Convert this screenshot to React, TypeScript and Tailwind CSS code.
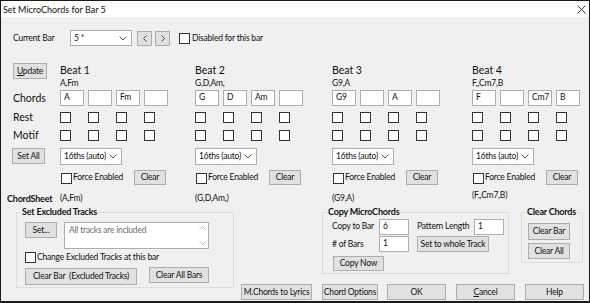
import React from "react";

const Btn = ({ children, className = "" }: { children: React.ReactNode; className?: string }) => (
  <div className={`flex items-center justify-center bg-[#e1e1e1] border border-[#adadad] whitespace-pre shrink-0 ${className}`}>{children}</div>
);

const Check = ({ className = "" }: { className?: string }) => (
  <div className={`w-[11px] h-[11px] bg-white border border-[#333333] shrink-0 ${className}`} />
);

const Field = ({ text = "", className = "" }: { text?: string; className?: string }) => (
  <div className={`h-[16px] bg-white border border-[#abadb3] pl-[3px] pt-[1px] flex items-start shrink-0 ${className}`}>{text}</div>
);

const Chevron = () => (
  <svg width="8" height="5" viewBox="0 0 8 5" className="shrink-0">
    <polyline points="0.5,0.5 4,4 7.5,0.5" fill="none" stroke="#555" strokeWidth="1" />
  </svg>
);

const Combo = ({ text, className = "" }: { text: string; className?: string }) => (
  <div className={`bg-white border border-[#adadad] flex items-center justify-between pl-[3px] pr-[4px] shrink-0 ${className}`}>
    <span>{text}</span>
    <Chevron />
  </div>
);

const cols = ["w-[135px]", "w-[137px]", "w-[140px]", "w-[116px]"];

const beats = [
  { name: "Beat 1", prog: "A,Fm", chords: ["A", "", "Fm", ""], sheet: "(A,Fm)" },
  { name: "Beat 2", prog: "G,D,Am,", chords: ["G", "D", "Am", ""], sheet: "(G,D,Am,)" },
  { name: "Beat 3", prog: "G9,A", chords: ["G9", "", "A", ""], sheet: "(G9,A)" },
  { name: "Beat 4", prog: "F,,Cm7,B", chords: ["F", "", "Cm7", "B"], sheet: "(F,,Cm7,B)" },
];

export default function App() {
  return (
    <div className="w-[590px] h-[303px] border-t border-l border-r border-b-2 border-[#1a1a1a] flex flex-col bg-[#f0f0f0] font-['Lato',sans-serif] text-[8.5px] leading-[11px] tracking-[-0.2px] text-[#111111] overflow-hidden">
      {/* title bar */}
      <div className="h-[16px] bg-white flex items-center justify-between pl-[2px] pr-[2px] shrink-0">
        <span className="text-[9px] tracking-normal">Set MicroChords for Bar 5</span>
        <svg width="9" height="9" viewBox="0 0 9 9" className="mr-[1px]">
          <line x1="0.5" y1="0.5" x2="8.5" y2="8.5" stroke="#222" strokeWidth="0.9" />
          <line x1="8.5" y1="0.5" x2="0.5" y2="8.5" stroke="#222" strokeWidth="0.9" />
        </svg>
      </div>

      {/* current bar row */}
      <div className="flex items-center h-[16px] mt-[13px] pl-[12px] shrink-0">
        <span className="w-[57px]">Current Bar</span>
        <Combo text="5 *" className="w-[62px] h-[16px]" />
        <Btn className="ml-[5px] w-[15px] h-[15px]">
          <svg width="4" height="7" viewBox="0 0 4 7"><polyline points="3.5,0.5 0.5,3.5 3.5,6.5" fill="none" stroke="#333" strokeWidth="0.9" /></svg>
        </Btn>
        <Btn className="ml-[3px] w-[15px] h-[15px]">
          <svg width="4" height="7" viewBox="0 0 4 7"><polyline points="0.5,0.5 3.5,3.5 0.5,6.5" fill="none" stroke="#333" strokeWidth="0.9" /></svg>
        </Btn>
        <Check className="ml-[9px]" />
        <span className="ml-[2px]">Disabled for this bar</span>
      </div>

      {/* header row */}
      <div className="flex mt-[17px] shrink-0">
        <div className="w-[59px] pl-[12px]">
          <Btn className="w-[34px] h-[16px]"><span><span className="underline">U</span>pdate</span></Btn>
        </div>
        {beats.map((b, i) => (
          <div key={i} className={`${cols[i]} flex flex-col`}>
            <span className="text-[10.5px] leading-[15px] tracking-normal">{b.name}</span>
            <span className="leading-[10px]">{b.prog}</span>
          </div>
        ))}
      </div>

      {/* chords row */}
      <div className="flex items-center h-[16px] mt-[2px] shrink-0">
        <span className="w-[59px] pl-[12px] text-[10.5px] tracking-normal">Chords</span>
        {beats.map((b, i) => (
          <div key={i} className={`${cols[i]} flex gap-[4px]`}>
            {b.chords.map((c, j) => (
              <Field key={j} text={c} className="w-[24px]" />
            ))}
          </div>
        ))}
      </div>

      {/* rest row */}
      <div className="flex items-center h-[11px] mt-[6px] shrink-0">
        <span className="w-[59px] pl-[12px] text-[10.5px] tracking-normal">Rest</span>
        {beats.map((_, i) => (
          <div key={i} className={`${cols[i]} flex gap-[17px]`}>
            <Check /><Check /><Check /><Check />
          </div>
        ))}
      </div>

      {/* motif row */}
      <div className="flex items-center h-[11px] mt-[7px] shrink-0">
        <span className="w-[59px] pl-[12px] text-[10.5px] tracking-normal">Motif</span>
        {beats.map((_, i) => (
          <div key={i} className={`${cols[i]} flex gap-[17px]`}>
            <Check /><Check /><Check /><Check />
          </div>
        ))}
      </div>

      {/* set all row */}
      <div className="flex items-center h-[16px] mt-[7px] shrink-0">
        <div className="w-[59px] pl-[11px]">
          <Btn className="w-[33px] h-[16px]">Set All</Btn>
        </div>
        {beats.map((_, i) => (
          <div key={i} className={`${cols[i]} flex`}>
            <Combo text="16ths (auto)" className="w-[62px] h-[17px]" />
          </div>
        ))}
      </div>

      {/* force row */}
      <div className="flex items-center h-[15px] mt-[6px] shrink-0">
        <div className="w-[59px]" />
        {beats.map((_, i) => (
          <div key={i} className={`${cols[i]} flex items-center`}>
            <div className="w-[74px] flex items-center">
              <Check className="ml-[1px] mt-[1px]" />
              <span className="ml-[1px]">Force Enabled</span>
            </div>
            <Btn className="w-[32px] h-[15px]">Clear</Btn>
          </div>
        ))}
      </div>

      {/* chordsheet row */}
      <div className="flex items-center h-[12px] mt-[7px] shrink-0">
        <span className="w-[59px] pl-[6px] font-bold text-[9px]">ChordSheet</span>
        {beats.map((b, i) => (
          <span key={i} className={`${cols[i]} ${i === 3 ? "-mt-[5px]" : ""}`}>{b.sheet}</span>
        ))}
      </div>

      {/* bottom section */}
      <div className="flex flex-1">
        <fieldset className="ml-[15px] mt-[2px] w-[218px] h-[82px] border border-[#dcdcdc] shrink-0">
          <legend className="ml-[4px] px-[1px] font-bold text-[9px] leading-[12px]">Set Excluded Tracks</legend>
          <div className="flex items-start mt-[4px] pl-[8px]">
            <Btn className="w-[32px] h-[16px]">Set...</Btn>
            <div className="ml-[7px] w-[145px] h-[27px] bg-white border border-[#abadb3] flex justify-between">
              <span className="pl-[4px] pt-[2px] text-[#6d6d6d]">All tracks are included</span>
              <div className="w-[11px] flex flex-col justify-between items-center py-[3px]">
                <svg width="7" height="4" viewBox="0 0 7 4"><polyline points="0.5,3.5 3.5,0.5 6.5,3.5" fill="none" stroke="#bfbfbf" strokeWidth="1" /></svg>
                <svg width="7" height="4" viewBox="0 0 7 4"><polyline points="0.5,0.5 3.5,3.5 6.5,0.5" fill="none" stroke="#bfbfbf" strokeWidth="1" /></svg>
              </div>
            </div>
          </div>
          <div className="flex items-center h-[11px] mt-[3px] pl-[8px]">
            <Check />
            <span className="ml-[1px]">Change Excluded Tracks at this bar</span>
          </div>
          <div className="flex items-start mt-[4px] pl-[8px]">
            <Btn className="w-[112px] h-[17px] mt-[1px]">Clear Bar  (Excluded Tracks)</Btn>
            <Btn className="ml-[12px] w-[60px] h-[16px]">Clear All Bars</Btn>
          </div>
        </fieldset>

        <div className="ml-[7px] flex flex-col flex-1">
          <div className="flex items-start">
            <fieldset className="ml-[81px] mt-[2px] w-[187px] h-[68px] border border-[#dcdcdc] shrink-0">
              <legend className="ml-[4px] px-[1px] font-bold text-[9px] leading-[12px]">Copy MicroChords</legend>
              <div className="flex items-center h-[15px] mt-[1px] pl-[9px]">
                <span className="w-[47px]">Copy to Bar</span>
                <Field text="6" className="w-[30px] h-[15px] border-[#0078d7]" />
                <span className="ml-[8px] w-[57px]">Pattern Length</span>
                <Field text="1" className="w-[30px] h-[15px]" />
              </div>
              <div className="flex items-center h-[16px] mt-[2px] pl-[9px]">
                <span className="w-[47px]">#&nbsp;of Bars</span>
                <Field text="1" className="w-[30px] h-[15px]" />
                <Btn className="ml-[8px] w-[72px] h-[16px]">Set to whole Track</Btn>
              </div>
              <div className="flex mt-[4px] pl-[10px]">
                <Btn className="w-[51px] h-[15px]">Copy Now</Btn>
              </div>
            </fieldset>
            <fieldset className="ml-[12px] mt-[2px] w-[62px] h-[57px] border border-[#dcdcdc] shrink-0">
              <legend className="ml-[4px] px-[1px] font-bold text-[9px] leading-[12px]">Clear Chords</legend>
              <div className="flex flex-col pl-[6px]">
                <Btn className="mt-[5px] w-[42px] h-[17px]">Clear Bar</Btn>
                <Btn className="mt-[3px] w-[42px] h-[16px]">Clear All</Btn>
              </div>
            </fieldset>
          </div>
          <div className="flex mt-[10px]">
            <Btn className="w-[71px] h-[16px]">M.Chords to Lyrics</Btn>
            <Btn className="ml-[10px] w-[56px] h-[16px]">Chord Options</Btn>
            <Btn className="ml-[9px] w-[59px] h-[16px] border-[#0078d7]">OK</Btn>
            <Btn className="ml-[10px] w-[59px] h-[16px]"><span><span className="underline">C</span>ancel</span></Btn>
            <Btn className="ml-[10px] w-[59px] h-[16px]">Help</Btn>
          </div>
        </div>
      </div>
    </div>
  );
}
